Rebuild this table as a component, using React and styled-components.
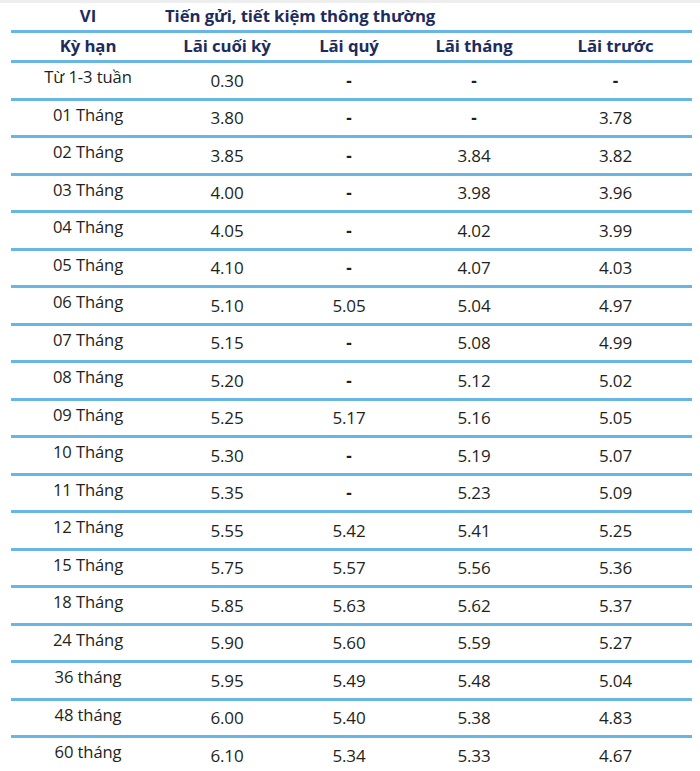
import React from "react";
import styled, { createGlobalStyle } from "styled-components";

const GlobalStyle = createGlobalStyle`
  html, body { margin: 0; padding: 0; background: #ffffff; }
  body { font-family: "Open Sans", "Noto Sans", sans-serif; }
`;

const Page = styled.div`
  width: 700px;
  background: #ffffff;
`;

const TopStrip = styled.div`
  height: 3px;
  background: #eeeeee;
`;

const Table = styled.div`
  margin-left: 11px;
  width: 681px;
  display: flex;
  flex-direction: column;
`;

const cols = "154px 124px 120px 130px 153px";

const Row = styled.div`
  display: grid;
  grid-template-columns: ${(p) => (p.$title ? "154px 527px" : cols)};
  box-sizing: border-box;
  height: ${(p) => p.$h}px;
  border-bottom: 3px solid #69b6e4;
  align-items: center;
`;

const HeadCell = styled.div`
  font-weight: 700;
  font-size: 16.8px;
  color: #1d2c5c;
  text-align: ${(p) => (p.$left ? "left" : "center")};
  line-height: 1;
  letter-spacing: -0.1px;
`;

const Cell = styled.div`
  font-size: ${(p) => (p.$first ? "16.6px" : "17px")};
  font-weight: ${(p) => (p.$dash ? 700 : 500)};
  color: #231f20;
  text-align: center;
  line-height: 1;
  padding-bottom: ${(p) => (p.$first ? "5px" : "0")};
  letter-spacing: -0.1px;
`;

const rows = [
  ["Từ 1-3 tuần", "0.30", "-", "-", "-"],
  ["01 Tháng", "3.80", "-", "-", "3.78"],
  ["02 Tháng", "3.85", "-", "3.84", "3.82"],
  ["03 Tháng", "4.00", "-", "3.98", "3.96"],
  ["04 Tháng", "4.05", "-", "4.02", "3.99"],
  ["05 Tháng", "4.10", "-", "4.07", "4.03"],
  ["06 Tháng", "5.10", "5.05", "5.04", "4.97"],
  ["07 Tháng", "5.15", "-", "5.08", "4.99"],
  ["08 Tháng", "5.20", "-", "5.12", "5.02"],
  ["09 Tháng", "5.25", "5.17", "5.16", "5.05"],
  ["10 Tháng", "5.30", "-", "5.19", "5.07"],
  ["11 Tháng", "5.35", "-", "5.23", "5.09"],
  ["12 Tháng", "5.55", "5.42", "5.41", "5.25"],
  ["15 Tháng", "5.75", "5.57", "5.56", "5.36"],
  ["18 Tháng", "5.85", "5.63", "5.62", "5.37"],
  ["24 Tháng", "5.90", "5.60", "5.59", "5.27"],
  ["36 tháng", "5.95", "5.49", "5.48", "5.04"],
  ["48 tháng", "6.00", "5.40", "5.38", "4.83"],
  ["60 tháng", "6.10", "5.34", "5.33", "4.67"],
];

const headers = ["Kỳ hạn", "Lãi cuối kỳ", "Lãi quý", "Lãi tháng", "Lãi trước"];

export default function App() {
  return (
    <Page>
      <GlobalStyle />
      <TopStrip />
      <Table>
        <Row $title $h={30}>
          <HeadCell>VI</HeadCell>
          <HeadCell $left>Tiến gửi, tiết kiệm thông thường</HeadCell>
        </Row>
        <Row $h={30}>
          {headers.map((h) => (
            <HeadCell key={h}>{h}</HeadCell>
          ))}
        </Row>
        {rows.map((r) => (
          <Row key={r[0]} $h={37.5}>
            {r.map((v, i) => (
              <Cell key={i} $first={i === 0} $dash={v === "-"}>
                {v}
              </Cell>
            ))}
          </Row>
        ))}
      </Table>
    </Page>
  );
}
